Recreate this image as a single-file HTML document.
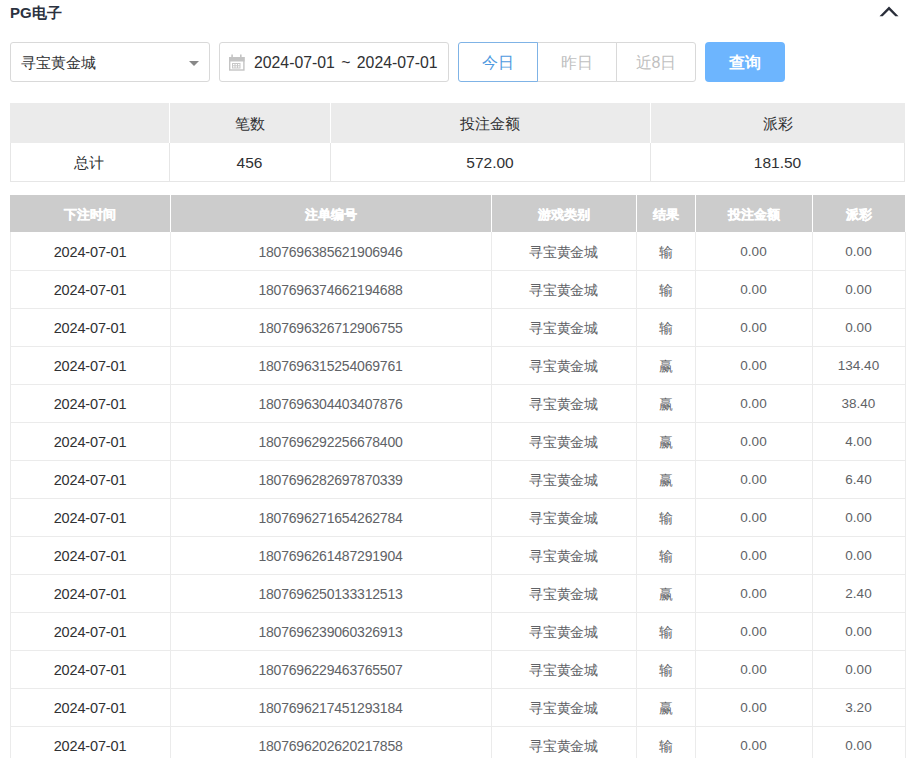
<!DOCTYPE html>
<html><head><meta charset="utf-8"><style>
*{box-sizing:border-box;margin:0;padding:0}
html,body{width:912px;height:758px;overflow:hidden;background:#fff}
body{position:relative;font-family:"Liberation Sans",sans-serif;color:#303133}
.a{position:absolute}
.title{left:10px;top:3px;font-size:15px;font-weight:bold;color:#2c3240;line-height:20px}
.chev{left:878px;top:5px}
.sel{left:10px;top:42px;width:200px;height:40px;border:1px solid #d9d9d9;border-radius:3px}
.sel .t{position:absolute;left:10px;top:1px;line-height:38px;font-size:15px;color:#303133}
.tri{position:absolute;left:178px;top:18px;width:0;height:0;border-left:5px solid transparent;border-right:5px solid transparent;border-top:5px solid #888}
.date{left:219px;top:42px;width:230px;height:40px;border:1px solid #d9d9d9;border-radius:3px}
.date .t{position:absolute;left:34px;top:1px;line-height:38px;font-size:15.8px;color:#303133;white-space:nowrap;word-spacing:2px}
.btn{top:42px;height:40px;border:1px solid #d9d9d9;text-align:center;line-height:39px;font-size:16px;color:#bfbfbf;background:#fff}
.b1{left:458px;width:80px;border-color:#7fb3e6;color:#4e9ae0;border-radius:3px 0 0 3px;z-index:2}
.b2{left:537px;width:80px}
.b3{left:616px;width:80px;border-radius:0 3px 3px 0}
.q{left:705px;top:42px;width:80px;height:40px;background:#6db5fe;border-radius:4px;color:#fff;text-align:center;line-height:41px;font-size:16px;font-weight:bold}
.cell{position:absolute;text-align:center;white-space:nowrap}
</style></head><body>
<div class="a title">PG电子</div>
<svg class="a" style="left:870px;top:0" width="40" height="24" viewBox="0 0 40 24"><polygon points="9.5,16.3 19,6.6 28.5,16.3 25.3,16.3 19,9.9 12.7,16.3" fill="#2a2e3a"/></svg>
<div class="a sel"><span class="t">寻宝黄金城</span><span class="tri"></span></div>
<div class="a date"><span class="t">2024-07-01 ~ 2024-07-01</span></div>
<svg class="a" style="left:224px;top:50px" width="28" height="26" viewBox="0 0 28 26"><g fill="#c4c4c4"><rect x="5" y="7" width="15.6" height="4.5"/><rect x="7.3" y="4.5" width="1.6" height="3"/><rect x="16" y="4.5" width="1.6" height="3"/></g><g fill="none" stroke="#c4c4c4" stroke-width="1.4"><rect x="5.7" y="7.7" width="14.2" height="12.3"/></g><g fill="none" stroke="#c8c8c8" stroke-width="1"><rect x="8.5" y="13.5" width="7.5" height="4.5"/><line x1="8.5" y1="15.75" x2="16" y2="15.75"/><line x1="11" y1="13.5" x2="11" y2="18"/><line x1="13.5" y1="13.5" x2="13.5" y2="18"/></g></svg>
<div class="a btn b2">昨日</div>
<div class="a btn b3">近8日</div>
<div class="a btn b1">今日</div>
<div class="a q">查询</div>

<div class="a" style="left:10px;top:103px;width:895px;height:40px;background:#ebebeb"></div>
<div class="a" style="left:169px;top:103px;width:1px;height:40px;background:#fff"></div>
<div class="a" style="left:330px;top:103px;width:1px;height:40px;background:#fff"></div>
<div class="a" style="left:650px;top:103px;width:1px;height:40px;background:#fff"></div>
<div class="a" style="left:10px;top:143px;width:895px;height:39px;border:1px solid #e6e6e6;border-top:none"></div>
<div class="a" style="left:169px;top:143px;width:1px;height:39px;background:#e6e6e6"></div>
<div class="a" style="left:330px;top:143px;width:1px;height:39px;background:#e6e6e6"></div>
<div class="a" style="left:650px;top:143px;width:1px;height:39px;background:#e6e6e6"></div>
<div class="a cell" style="left:10px;width:159px;top:104px;line-height:40px;font-size:15px;color:#303133"></div>
<div class="a cell" style="left:9px;width:159px;top:144px;line-height:39px;font-size:14.5px;color:#303133">总计</div>
<div class="a cell" style="left:169px;width:161px;top:104px;line-height:40px;font-size:15px;color:#303133">笔数</div>
<div class="a cell" style="left:169px;width:161px;top:143px;line-height:39px;font-size:15.5px;color:#303133">456</div>
<div class="a cell" style="left:330px;width:320px;top:104px;line-height:40px;font-size:15px;color:#303133">投注金额</div>
<div class="a cell" style="left:330px;width:320px;top:143px;line-height:39px;font-size:15.5px;color:#303133">572.00</div>
<div class="a cell" style="left:650px;width:255px;top:104px;line-height:40px;font-size:15px;color:#303133">派彩</div>
<div class="a cell" style="left:650px;width:255px;top:143px;line-height:39px;font-size:15.5px;color:#303133">181.50</div>
<div class="a" style="left:10px;top:195px;width:895px;height:37px;background:#cccccc"></div>
<div class="a" style="left:170px;top:195px;width:1px;height:37px;background:#fff"></div>
<div class="a" style="left:491px;top:195px;width:1px;height:37px;background:#fff"></div>
<div class="a" style="left:636px;top:195px;width:1px;height:37px;background:#fff"></div>
<div class="a" style="left:695px;top:195px;width:1px;height:37px;background:#fff"></div>
<div class="a" style="left:812px;top:195px;width:1px;height:37px;background:#fff"></div>
<div class="a cell" style="left:10px;width:160px;top:196px;line-height:37px;font-size:13px;font-weight:bold;color:#fff;-webkit-text-stroke:0.35px #fff">下注时间</div>
<div class="a cell" style="left:170px;width:321px;top:196px;line-height:37px;font-size:13px;font-weight:bold;color:#fff;-webkit-text-stroke:0.35px #fff">注单编号</div>
<div class="a cell" style="left:491px;width:145px;top:196px;line-height:37px;font-size:13px;font-weight:bold;color:#fff;-webkit-text-stroke:0.35px #fff">游戏类别</div>
<div class="a cell" style="left:636px;width:59px;top:196px;line-height:37px;font-size:13px;font-weight:bold;color:#fff;-webkit-text-stroke:0.35px #fff">结果</div>
<div class="a cell" style="left:695px;width:117px;top:196px;line-height:37px;font-size:13px;font-weight:bold;color:#fff;-webkit-text-stroke:0.35px #fff">投注金额</div>
<div class="a cell" style="left:812px;width:93px;top:196px;line-height:37px;font-size:13px;font-weight:bold;color:#fff;-webkit-text-stroke:0.35px #fff">派彩</div>
<div class="a" style="left:10px;top:232px;width:1px;height:526px;background:#ebebeb"></div>
<div class="a" style="left:905px;top:232px;width:1px;height:526px;background:#ebebeb"></div>
<div class="a" style="left:170px;top:232px;width:1px;height:526px;background:#ebebeb"></div>
<div class="a" style="left:491px;top:232px;width:1px;height:526px;background:#ebebeb"></div>
<div class="a" style="left:636px;top:232px;width:1px;height:526px;background:#ebebeb"></div>
<div class="a" style="left:695px;top:232px;width:1px;height:526px;background:#ebebeb"></div>
<div class="a" style="left:812px;top:232px;width:1px;height:526px;background:#ebebeb"></div>
<div class="a" style="left:10px;top:270px;width:895px;height:1px;background:#ebebeb"></div>
<div class="a" style="left:10px;top:308px;width:895px;height:1px;background:#ebebeb"></div>
<div class="a" style="left:10px;top:346px;width:895px;height:1px;background:#ebebeb"></div>
<div class="a" style="left:10px;top:384px;width:895px;height:1px;background:#ebebeb"></div>
<div class="a" style="left:10px;top:422px;width:895px;height:1px;background:#ebebeb"></div>
<div class="a" style="left:10px;top:460px;width:895px;height:1px;background:#ebebeb"></div>
<div class="a" style="left:10px;top:498px;width:895px;height:1px;background:#ebebeb"></div>
<div class="a" style="left:10px;top:536px;width:895px;height:1px;background:#ebebeb"></div>
<div class="a" style="left:10px;top:574px;width:895px;height:1px;background:#ebebeb"></div>
<div class="a" style="left:10px;top:612px;width:895px;height:1px;background:#ebebeb"></div>
<div class="a" style="left:10px;top:650px;width:895px;height:1px;background:#ebebeb"></div>
<div class="a" style="left:10px;top:688px;width:895px;height:1px;background:#ebebeb"></div>
<div class="a" style="left:10px;top:726px;width:895px;height:1px;background:#ebebeb"></div>
<div class="a cell" style="left:10px;width:160px;top:233px;line-height:38px;font-size:14.5px;letter-spacing:-0.15px;color:#303133">2024-07-01</div>
<div class="a cell" style="left:170px;width:321px;top:233px;line-height:38px;font-size:14px;letter-spacing:-0.2px;color:#606266">1807696385621906946</div>
<div class="a cell" style="left:491px;width:145px;top:233px;line-height:38px;font-size:13.5px;color:#606266;padding-top:1px;letter-spacing:-0.4px">寻宝黄金城</div>
<div class="a cell" style="left:636px;width:59px;top:233px;line-height:38px;font-size:14px;color:#606266">输</div>
<div class="a cell" style="left:695px;width:117px;top:233px;line-height:38px;font-size:13.5px;color:#606266">0.00</div>
<div class="a cell" style="left:812px;width:93px;top:233px;line-height:38px;font-size:13.5px;color:#606266">0.00</div>
<div class="a cell" style="left:10px;width:160px;top:271px;line-height:38px;font-size:14.5px;letter-spacing:-0.15px;color:#303133">2024-07-01</div>
<div class="a cell" style="left:170px;width:321px;top:271px;line-height:38px;font-size:14px;letter-spacing:-0.2px;color:#606266">1807696374662194688</div>
<div class="a cell" style="left:491px;width:145px;top:271px;line-height:38px;font-size:13.5px;color:#606266;padding-top:1px;letter-spacing:-0.4px">寻宝黄金城</div>
<div class="a cell" style="left:636px;width:59px;top:271px;line-height:38px;font-size:14px;color:#606266">输</div>
<div class="a cell" style="left:695px;width:117px;top:271px;line-height:38px;font-size:13.5px;color:#606266">0.00</div>
<div class="a cell" style="left:812px;width:93px;top:271px;line-height:38px;font-size:13.5px;color:#606266">0.00</div>
<div class="a cell" style="left:10px;width:160px;top:309px;line-height:38px;font-size:14.5px;letter-spacing:-0.15px;color:#303133">2024-07-01</div>
<div class="a cell" style="left:170px;width:321px;top:309px;line-height:38px;font-size:14px;letter-spacing:-0.2px;color:#606266">1807696326712906755</div>
<div class="a cell" style="left:491px;width:145px;top:309px;line-height:38px;font-size:13.5px;color:#606266;padding-top:1px;letter-spacing:-0.4px">寻宝黄金城</div>
<div class="a cell" style="left:636px;width:59px;top:309px;line-height:38px;font-size:14px;color:#606266">输</div>
<div class="a cell" style="left:695px;width:117px;top:309px;line-height:38px;font-size:13.5px;color:#606266">0.00</div>
<div class="a cell" style="left:812px;width:93px;top:309px;line-height:38px;font-size:13.5px;color:#606266">0.00</div>
<div class="a cell" style="left:10px;width:160px;top:347px;line-height:38px;font-size:14.5px;letter-spacing:-0.15px;color:#303133">2024-07-01</div>
<div class="a cell" style="left:170px;width:321px;top:347px;line-height:38px;font-size:14px;letter-spacing:-0.2px;color:#606266">1807696315254069761</div>
<div class="a cell" style="left:491px;width:145px;top:347px;line-height:38px;font-size:13.5px;color:#606266;padding-top:1px;letter-spacing:-0.4px">寻宝黄金城</div>
<div class="a cell" style="left:636px;width:59px;top:347px;line-height:38px;font-size:14px;color:#606266">赢</div>
<div class="a cell" style="left:695px;width:117px;top:347px;line-height:38px;font-size:13.5px;color:#606266">0.00</div>
<div class="a cell" style="left:812px;width:93px;top:347px;line-height:38px;font-size:13.5px;color:#606266">134.40</div>
<div class="a cell" style="left:10px;width:160px;top:385px;line-height:38px;font-size:14.5px;letter-spacing:-0.15px;color:#303133">2024-07-01</div>
<div class="a cell" style="left:170px;width:321px;top:385px;line-height:38px;font-size:14px;letter-spacing:-0.2px;color:#606266">1807696304403407876</div>
<div class="a cell" style="left:491px;width:145px;top:385px;line-height:38px;font-size:13.5px;color:#606266;padding-top:1px;letter-spacing:-0.4px">寻宝黄金城</div>
<div class="a cell" style="left:636px;width:59px;top:385px;line-height:38px;font-size:14px;color:#606266">赢</div>
<div class="a cell" style="left:695px;width:117px;top:385px;line-height:38px;font-size:13.5px;color:#606266">0.00</div>
<div class="a cell" style="left:812px;width:93px;top:385px;line-height:38px;font-size:13.5px;color:#606266">38.40</div>
<div class="a cell" style="left:10px;width:160px;top:423px;line-height:38px;font-size:14.5px;letter-spacing:-0.15px;color:#303133">2024-07-01</div>
<div class="a cell" style="left:170px;width:321px;top:423px;line-height:38px;font-size:14px;letter-spacing:-0.2px;color:#606266">1807696292256678400</div>
<div class="a cell" style="left:491px;width:145px;top:423px;line-height:38px;font-size:13.5px;color:#606266;padding-top:1px;letter-spacing:-0.4px">寻宝黄金城</div>
<div class="a cell" style="left:636px;width:59px;top:423px;line-height:38px;font-size:14px;color:#606266">赢</div>
<div class="a cell" style="left:695px;width:117px;top:423px;line-height:38px;font-size:13.5px;color:#606266">0.00</div>
<div class="a cell" style="left:812px;width:93px;top:423px;line-height:38px;font-size:13.5px;color:#606266">4.00</div>
<div class="a cell" style="left:10px;width:160px;top:461px;line-height:38px;font-size:14.5px;letter-spacing:-0.15px;color:#303133">2024-07-01</div>
<div class="a cell" style="left:170px;width:321px;top:461px;line-height:38px;font-size:14px;letter-spacing:-0.2px;color:#606266">1807696282697870339</div>
<div class="a cell" style="left:491px;width:145px;top:461px;line-height:38px;font-size:13.5px;color:#606266;padding-top:1px;letter-spacing:-0.4px">寻宝黄金城</div>
<div class="a cell" style="left:636px;width:59px;top:461px;line-height:38px;font-size:14px;color:#606266">赢</div>
<div class="a cell" style="left:695px;width:117px;top:461px;line-height:38px;font-size:13.5px;color:#606266">0.00</div>
<div class="a cell" style="left:812px;width:93px;top:461px;line-height:38px;font-size:13.5px;color:#606266">6.40</div>
<div class="a cell" style="left:10px;width:160px;top:499px;line-height:38px;font-size:14.5px;letter-spacing:-0.15px;color:#303133">2024-07-01</div>
<div class="a cell" style="left:170px;width:321px;top:499px;line-height:38px;font-size:14px;letter-spacing:-0.2px;color:#606266">1807696271654262784</div>
<div class="a cell" style="left:491px;width:145px;top:499px;line-height:38px;font-size:13.5px;color:#606266;padding-top:1px;letter-spacing:-0.4px">寻宝黄金城</div>
<div class="a cell" style="left:636px;width:59px;top:499px;line-height:38px;font-size:14px;color:#606266">输</div>
<div class="a cell" style="left:695px;width:117px;top:499px;line-height:38px;font-size:13.5px;color:#606266">0.00</div>
<div class="a cell" style="left:812px;width:93px;top:499px;line-height:38px;font-size:13.5px;color:#606266">0.00</div>
<div class="a cell" style="left:10px;width:160px;top:537px;line-height:38px;font-size:14.5px;letter-spacing:-0.15px;color:#303133">2024-07-01</div>
<div class="a cell" style="left:170px;width:321px;top:537px;line-height:38px;font-size:14px;letter-spacing:-0.2px;color:#606266">1807696261487291904</div>
<div class="a cell" style="left:491px;width:145px;top:537px;line-height:38px;font-size:13.5px;color:#606266;padding-top:1px;letter-spacing:-0.4px">寻宝黄金城</div>
<div class="a cell" style="left:636px;width:59px;top:537px;line-height:38px;font-size:14px;color:#606266">输</div>
<div class="a cell" style="left:695px;width:117px;top:537px;line-height:38px;font-size:13.5px;color:#606266">0.00</div>
<div class="a cell" style="left:812px;width:93px;top:537px;line-height:38px;font-size:13.5px;color:#606266">0.00</div>
<div class="a cell" style="left:10px;width:160px;top:575px;line-height:38px;font-size:14.5px;letter-spacing:-0.15px;color:#303133">2024-07-01</div>
<div class="a cell" style="left:170px;width:321px;top:575px;line-height:38px;font-size:14px;letter-spacing:-0.2px;color:#606266">1807696250133312513</div>
<div class="a cell" style="left:491px;width:145px;top:575px;line-height:38px;font-size:13.5px;color:#606266;padding-top:1px;letter-spacing:-0.4px">寻宝黄金城</div>
<div class="a cell" style="left:636px;width:59px;top:575px;line-height:38px;font-size:14px;color:#606266">赢</div>
<div class="a cell" style="left:695px;width:117px;top:575px;line-height:38px;font-size:13.5px;color:#606266">0.00</div>
<div class="a cell" style="left:812px;width:93px;top:575px;line-height:38px;font-size:13.5px;color:#606266">2.40</div>
<div class="a cell" style="left:10px;width:160px;top:613px;line-height:38px;font-size:14.5px;letter-spacing:-0.15px;color:#303133">2024-07-01</div>
<div class="a cell" style="left:170px;width:321px;top:613px;line-height:38px;font-size:14px;letter-spacing:-0.2px;color:#606266">1807696239060326913</div>
<div class="a cell" style="left:491px;width:145px;top:613px;line-height:38px;font-size:13.5px;color:#606266;padding-top:1px;letter-spacing:-0.4px">寻宝黄金城</div>
<div class="a cell" style="left:636px;width:59px;top:613px;line-height:38px;font-size:14px;color:#606266">输</div>
<div class="a cell" style="left:695px;width:117px;top:613px;line-height:38px;font-size:13.5px;color:#606266">0.00</div>
<div class="a cell" style="left:812px;width:93px;top:613px;line-height:38px;font-size:13.5px;color:#606266">0.00</div>
<div class="a cell" style="left:10px;width:160px;top:651px;line-height:38px;font-size:14.5px;letter-spacing:-0.15px;color:#303133">2024-07-01</div>
<div class="a cell" style="left:170px;width:321px;top:651px;line-height:38px;font-size:14px;letter-spacing:-0.2px;color:#606266">1807696229463765507</div>
<div class="a cell" style="left:491px;width:145px;top:651px;line-height:38px;font-size:13.5px;color:#606266;padding-top:1px;letter-spacing:-0.4px">寻宝黄金城</div>
<div class="a cell" style="left:636px;width:59px;top:651px;line-height:38px;font-size:14px;color:#606266">输</div>
<div class="a cell" style="left:695px;width:117px;top:651px;line-height:38px;font-size:13.5px;color:#606266">0.00</div>
<div class="a cell" style="left:812px;width:93px;top:651px;line-height:38px;font-size:13.5px;color:#606266">0.00</div>
<div class="a cell" style="left:10px;width:160px;top:689px;line-height:38px;font-size:14.5px;letter-spacing:-0.15px;color:#303133">2024-07-01</div>
<div class="a cell" style="left:170px;width:321px;top:689px;line-height:38px;font-size:14px;letter-spacing:-0.2px;color:#606266">1807696217451293184</div>
<div class="a cell" style="left:491px;width:145px;top:689px;line-height:38px;font-size:13.5px;color:#606266;padding-top:1px;letter-spacing:-0.4px">寻宝黄金城</div>
<div class="a cell" style="left:636px;width:59px;top:689px;line-height:38px;font-size:14px;color:#606266">赢</div>
<div class="a cell" style="left:695px;width:117px;top:689px;line-height:38px;font-size:13.5px;color:#606266">0.00</div>
<div class="a cell" style="left:812px;width:93px;top:689px;line-height:38px;font-size:13.5px;color:#606266">3.20</div>
<div class="a cell" style="left:10px;width:160px;top:727px;line-height:38px;font-size:14.5px;letter-spacing:-0.15px;color:#303133">2024-07-01</div>
<div class="a cell" style="left:170px;width:321px;top:727px;line-height:38px;font-size:14px;letter-spacing:-0.2px;color:#606266">1807696202620217858</div>
<div class="a cell" style="left:491px;width:145px;top:727px;line-height:38px;font-size:13.5px;color:#606266;padding-top:1px;letter-spacing:-0.4px">寻宝黄金城</div>
<div class="a cell" style="left:636px;width:59px;top:727px;line-height:38px;font-size:14px;color:#606266">输</div>
<div class="a cell" style="left:695px;width:117px;top:727px;line-height:38px;font-size:13.5px;color:#606266">0.00</div>
<div class="a cell" style="left:812px;width:93px;top:727px;line-height:38px;font-size:13.5px;color:#606266">0.00</div>
</body></html>
